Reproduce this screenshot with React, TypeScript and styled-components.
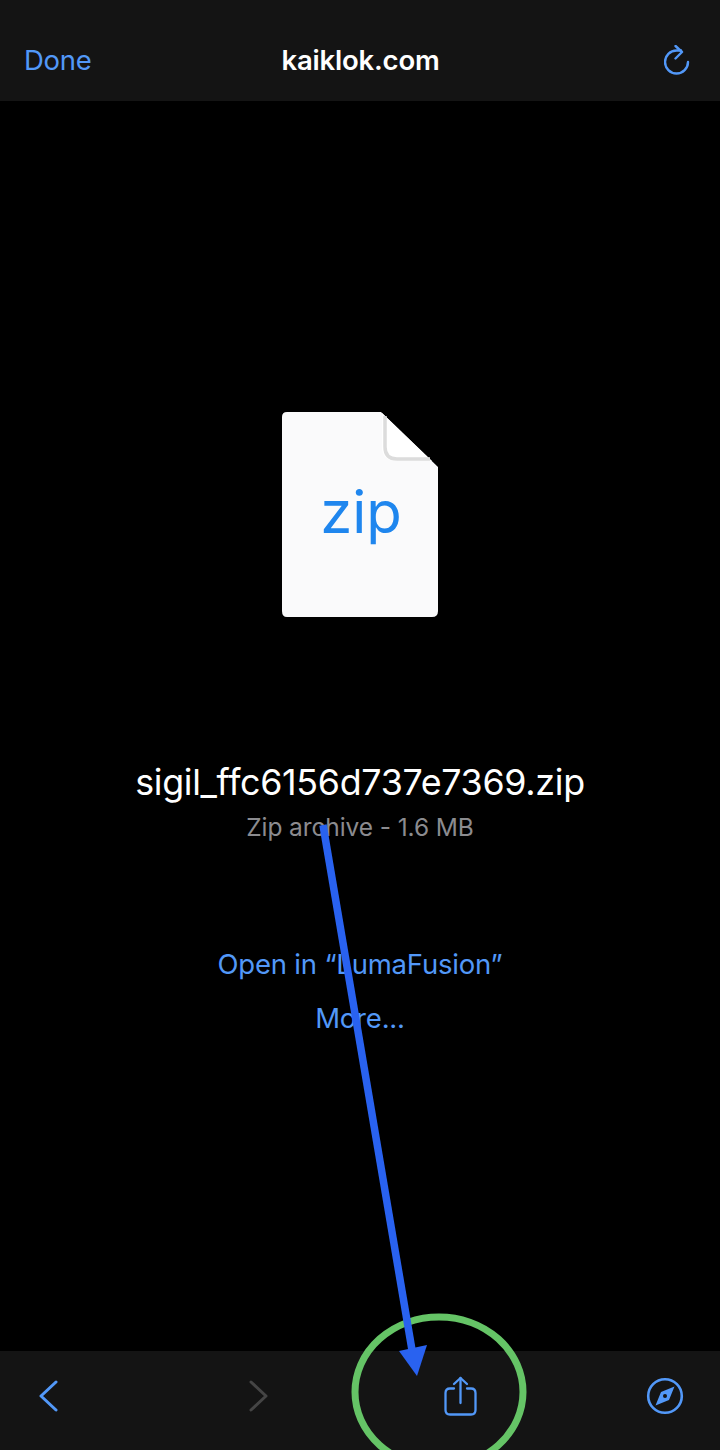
import * as React from 'react';
import styled, { createGlobalStyle } from 'styled-components';

const Global = createGlobalStyle`
html,body{
  margin:0;
  padding:0;
  background:#000;
}
`;

const Screen = styled.div`
width:720px;
height:1450px;
position:relative;
overflow:hidden;
background:#000;
display:flex;
flex-direction:column;
font-family:Inter,"Liberation Sans",sans-serif;
`;

const TopBar = styled.header`
height:101px;
flex:none;
box-sizing:border-box;
padding:19px 30px 0 24px;
background:#141414;
display:flex;
align-items:center;
justify-content:space-between;
`;

const Done = styled.span`
width:90px;
font-size:27.5px;
letter-spacing:-0.3px;
color:#5298f8;
`;

const Host = styled.span`
margin-left:7px;
font-size:27.5px;
font-weight:600;
letter-spacing:-0.2px;
color:#fff;
`;

const ReloadSlot = styled.div`
width:90px;
display:flex;
justify-content:flex-end;
`;

const Body = styled.main`
flex:1;
display:flex;
flex-direction:column;
align-items:center;
padding-top:310px;
`;

const FileIcon = styled.svg`
display:block;
width:158px;
height:207px;
`;

const ZipLabel = styled.text`
font-family:Inter,sans-serif;
font-size:58px;
fill:#1f86ee;
filter:blur(0.5px);
`;

const FileName = styled.div`
margin-top:144px;
font-size:35.8px;
line-height:40px;
letter-spacing:-0.3px;
color:#fff;
`;

const FileMeta = styled.div`
margin-top:10px;
font-size:24.5px;
line-height:30px;
letter-spacing:-0.1px;
color:#8b8b8f;
`;

const ActionLink = styled.a<{ $gap: number }>`
margin-top:${p => p.$gap}px;
font-size:27.5px;
line-height:34px;
letter-spacing:-0.2px;
color:#5298f8;
`;

const BottomBar = styled.footer`
height:99px;
flex:none;
box-sizing:border-box;
background:#141414;
display:flex;
align-items:center;
padding:0 0 10px 0;
`;

const NavSlot = styled.div<{ $gap: number }>`
width:60px;
margin-left:${p => p.$gap}px;
display:flex;
justify-content:center;
`;

const Annotation = styled.svg`
position:absolute;
left:0;
top:0;
width:720px;
height:1450px;
pointer-events:none;
`;

const blue = '#5298f8';

const App = () => {
  return <Screen>
    <Global/>
    <TopBar>
      <Done>Done</Done>
      <Host>kaiklok.com</Host>
      <ReloadSlot>
        <svg width="26" height="30" viewBox="0 0 26 30" fill="none" stroke={blue} strokeWidth="2.4" strokeLinecap="round" strokeLinejoin="round">
          <path d="M24 17 A11.5 11.5 0 1 1 12.5 5.5 H17"/>
          <path d="M11.5 1 L18 7 L11.5 13.5"/>
        </svg>
      </ReloadSlot>
    </TopBar>
    <Body>
      <FileIcon viewBox="0 0 158 207">
        <path d="M6 1 H100 L157 56 V200 Q157 206 151 206 H6 Q1 206 1 200 V6 Q1 1 6 1 Z" fill="#fafafb"/>
        <path d="M101 2 V36 Q101 50 116 50 H151 Z" fill="#fff"/>
        <path d="M104 5 V36 Q104 48 116 48 H149" fill="none" stroke="#dcdcdc" strokeWidth="3.5"/>
        <ZipLabel x="80" y="122" textAnchor="middle">zip</ZipLabel>
      </FileIcon>
      <FileName>sigil_ffc6156d737e7369.zip</FileName>
      <FileMeta>Zip archive - 1.6 MB</FileMeta>
      <ActionLink $gap={105}>Open in “LumaFusion”</ActionLink>
      <ActionLink $gap={20}>More...</ActionLink>
    </Body>
    <BottomBar>
      <NavSlot $gap={18}>
        <svg width="19" height="32" viewBox="0 0 19 32" fill="none" stroke={blue} strokeWidth="3" strokeLinecap="round" strokeLinejoin="round">
          <path d="M17 2 L2 16 L17 30"/>
        </svg>
      </NavSlot>
      <NavSlot $gap={150}>
        <svg width="19" height="32" viewBox="0 0 19 32" fill="none" stroke="#454545" strokeWidth="3" strokeLinecap="round" strokeLinejoin="round">
          <path d="M2 2 L17 16 L2 30"/>
        </svg>
      </NavSlot>
      <NavSlot $gap={142}>
        <svg width="33" height="40" viewBox="0 0 33 40" fill="none" stroke={blue} strokeWidth="2.3" strokeLinecap="round" strokeLinejoin="round">
          <path d="M10 12.5 H6 Q1.5 12.5 1.5 17 V34 Q1.5 38.5 6 38.5 H27 Q31.5 38.5 31.5 34 V17 Q31.5 12.5 27 12.5 H23"/>
          <path d="M16.5 2 V27"/>
          <path d="M10 8 L16.5 2 L23 8"/>
        </svg>
      </NavSlot>
      <NavSlot $gap={145}>
        <svg width="38" height="38" viewBox="0 0 38 38">
          <circle cx="19" cy="19" r="16.8" fill="none" stroke={blue} strokeWidth="2.6"/>
          <path d="M28.5 9.5 L23 23 L15 15 Z M9.5 28.5 L15 15 L23 23 Z" fill={blue}/>
          <circle cx="19" cy="19" r="2" fill="#141414"/>
        </svg>
      </NavSlot>
    </BottomBar>
    <Annotation viewBox="0 0 720 1450">
      <ellipse cx="439" cy="1392" rx="84" ry="75" fill="none" stroke="#65c466" strokeWidth="7"/>
      <path d="M323 825 L412 1350" stroke="#2962f0" strokeWidth="7.5" fill="none"/>
      <path d="M399 1351 L427 1345 L417 1376 Z" fill="#2962f0"/>
    </Annotation>
  </Screen>
}

export default App;
